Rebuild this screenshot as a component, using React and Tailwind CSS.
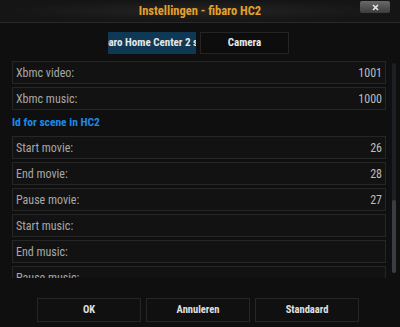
import React from "react";

const Row = ({ label, value }) => (
  <div className="shrink-0 h-[23px] flex items-center justify-between px-[3px] bg-[#121212] border border-[#262626] text-[12px] text-[#a8a8a8]">
    <span>{label}</span>
    <span className="text-[#bdbdbd]">{value}</span>
  </div>
);

export default function App() {
  return (
    <div
      className="w-[400px] h-[327px] bg-[#0f0f0f] overflow-hidden flex flex-col"
      style={{ fontFamily: "'Roboto Condensed', Roboto, 'Liberation Sans', sans-serif" }}
    >
      {/* Title bar */}
      <div className="relative h-[23px] shrink-0 flex items-center justify-center bg-[radial-gradient(ellipse_at_center,#242424_0%,#151515_70%)] border-b border-[#2a2a2a]">
        <span className="text-[12.5px] font-bold text-[#e3a12c] mt-[1px]">
          Instellingen - fibaro HC2
        </span>
        <button className="absolute right-[10px] top-[1px] w-[30px] h-[12px] rounded-[2px] bg-gradient-to-b from-[#6a6a6a] to-[#3c3c3c] flex items-center justify-center">
          <svg width="7" height="7" viewBox="0 0 7 7">
            <path d="M1 1L6 6M6 1L1 6" stroke="#e8e8e8" strokeWidth="1.6" />
          </svg>
        </button>
      </div>

      {/* Tabs */}
      <div className="flex justify-center gap-[4px] mt-[9px] ml-[-3px]">
        <div className="w-[88px] h-[22px] bg-[#0e3854] flex items-center overflow-hidden whitespace-nowrap text-[11px] font-bold text-[#e8e8e8]">
          <span className="ml-[-11px] shrink-0">fibaro Home Center 2 settings</span>
        </div>
        <div className="w-[89px] h-[22px] bg-[#0d0d0d] border border-[#242424] flex items-center justify-center text-[11px] font-bold text-[#e8e8e8]">
          Camera
        </div>
      </div>

      {/* List */}
      <div className="flex mt-[7px] h-[217px] shrink-0">
        <div className="ml-[12px] w-[374px] h-[217px] overflow-hidden flex flex-col gap-[3px]">
          <Row label="Xbmc video:" value="1001" />
          <Row label="Xbmc music:" value="1000" />
          <div className="shrink-0 h-[20px] flex items-center text-[11.5px] font-bold text-[#1e8ae8]">
            Id for scene in HC2
          </div>
          <Row label="Start movie:" value="26" />
          <Row label="End movie:" value="28" />
          <Row label="Pause movie:" value="27" />
          <Row label="Start music:" value="" />
          <Row label="End music:" value="" />
          <Row label="Pause music:" value="" />
        </div>
        <div className="ml-[6px] mt-[2px] w-[4px] h-[210px] rounded-full bg-[#1c2024] flex flex-col justify-end">
          <div className="h-[73px] rounded-full bg-[#3a3e42]" />
        </div>
      </div>

      {/* Buttons */}
      <div className="flex gap-[5px] ml-[37px] mt-[20px]">
        {["OK", "Annuleren", "Standaard"].map((b) => (
          <div
            key={b}
            className="w-[104px] h-[24px] bg-[#101010] border border-[#262626] flex items-center justify-center text-[10.5px] font-bold text-[#e0e0e0]"
          >
            {b}
          </div>
        ))}
      </div>
    </div>
  );
}
